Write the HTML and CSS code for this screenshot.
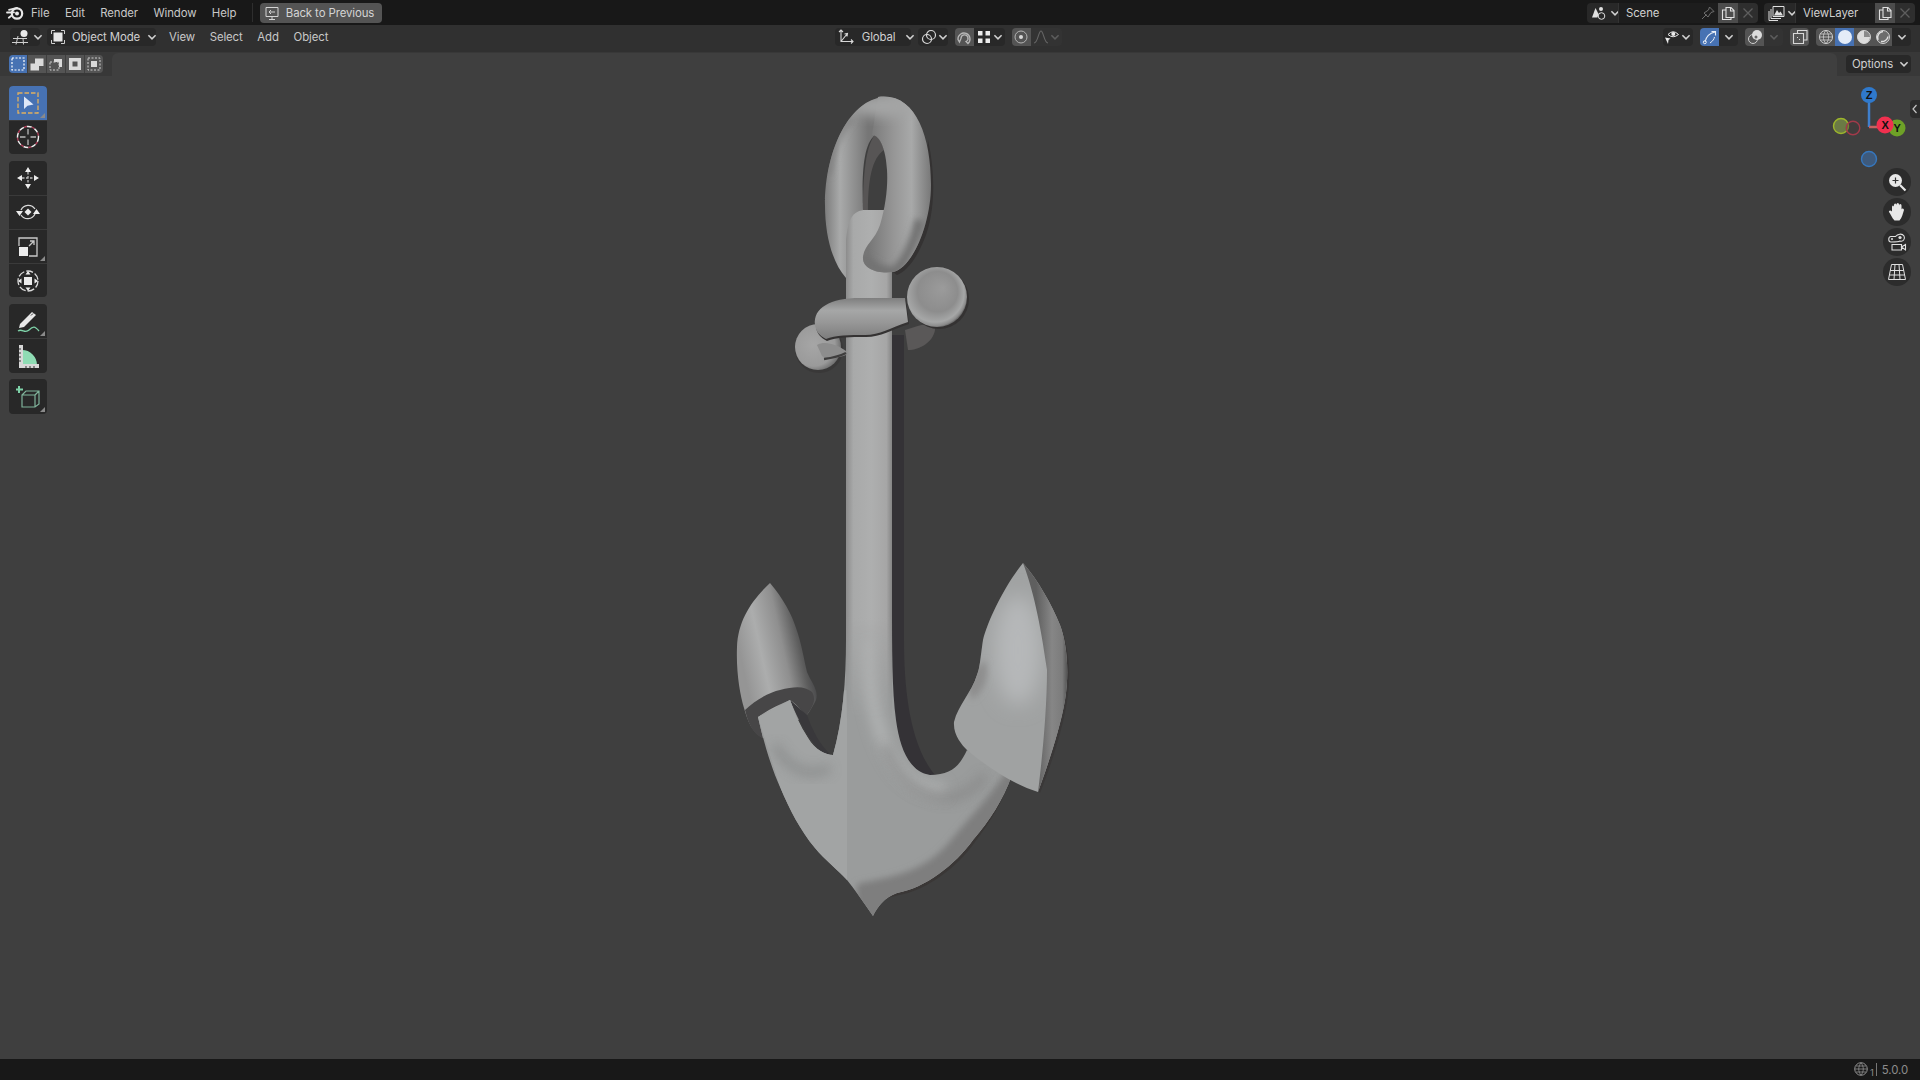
FILE: index.html
```html
<!DOCTYPE html>
<html lang="en">

<head>
    <meta charset="UTF-8" />
    <title>Blender</title>
    <link rel="stylesheet" href="styles.css">
</head>

<body>
    <svg class="defs" width="0" height="0">
        <symbol id="chev" viewBox="0 0 10 10">
            <path d="M2 3.5 5 6.5 8 3.5" fill="none" stroke="currentColor" stroke-width="1.3" />
        </symbol>
        <symbol id="copy" viewBox="0 0 16 16">
            <path d="M6 2.500h5l3 3v7H6zM10.500 2.500v3.500H14M6 5H2.500v9.500H11v-2" fill="none" stroke="#e0e0e0" stroke-width="1.100" />
        </symbol>
        <symbol id="cross" viewBox="0 0 16 16">
            <path d="M3.500 3.500 12.500 12.500M12.500 3.500 3.500 12.500" stroke="#5e5e5e" stroke-width="1.300" />
        </symbol>
    </svg>

    <div class="topbar">
        <svg class="logo" viewBox="0 0 18 16" width="18" height="16">
            <circle cx="11" cy="8.500" r="5.200" fill="none" stroke="#e8e8e8" stroke-width="2.200" />
            <circle cx="11" cy="8.500" r="2" fill="#e8e8e8" />
            <path d="M1 7.500 8 7.400M3 4.800 11 2.800M5 11 2.800 12.800" stroke="#e8e8e8" stroke-width="1.800" stroke-linecap="round" />
        </svg>
        <nav class="menu top-menu">
            <span>File</span><span>Edit</span><span>Render</span><span>Window</span><span>Help</span>
        </nav>
        <div class="top-sep"></div>
        <div class="back-btn">
            <svg viewBox="0 0 16 16" width="16" height="16">
                <path d="M2 2.500h12v9H2zM5 14.500h6M8 11.500v3M11 7H5M7 5 5 7 7 9" fill="none" stroke="#d4d4d4" stroke-width="1" />
            </svg>
            <span>Back to Previous</span>
        </div>
        <div class="top-right">
            <div class="id-field scene">
                <div class="id-icon">
                    <svg viewBox="0 0 18 16" width="18" height="16">
                        <path d="M1 12.500 4.500 3l3 6-1 3.500z" fill="#e0e0e0" />
                        <circle cx="10" cy="4" r="2" fill="#e0e0e0" />
                        <circle cx="10.500" cy="11" r="3.300" fill="none" stroke="#e0e0e0" stroke-width="1" />
                    </svg>
                    <svg class="chev"><use href="#chev" /></svg>
                </div>
                <div class="id-name">
                    <span>Scene</span>
                    <svg viewBox="0 0 16 16" width="16" height="16">
                        <path d="M2 14 6.500 9.500M9.500 2 14 6.500 11 7.500 8 12 4 8 8.500 5z" fill="none" stroke="#6e6e6e" stroke-width="1" />
                    </svg>
                </div>
                <div class="id-copy"><svg width="16" height="16"><use href="#copy" /></svg></div>
                <div class="id-x"><svg width="16" height="16"><use href="#cross" /></svg></div>
            </div>
            <div class="id-field layer">
                <div class="id-icon">
                    <svg viewBox="0 0 18 16" width="18" height="16">
                        <path d="M5 1.500h11v10H5zM3 4v9.500h10M1 6v9.500h9" fill="none" stroke="#e0e0e0" stroke-width="1" />
                        <path d="M6 10.500 9 5l2 3 1.500-1.500 2.500 4z" fill="#e0e0e0" />
                    </svg>
                    <svg class="chev"><use href="#chev" /></svg>
                </div>
                <div class="id-name"><span>ViewLayer</span></div>
                <div class="id-copy"><svg width="16" height="16"><use href="#copy" /></svg></div>
                <div class="id-x"><svg width="16" height="16"><use href="#cross" /></svg></div>
            </div>
        </div>
    </div>

    <div class="header">
        <div class="btn editor-btn">
            <svg viewBox="0 0 20 16" width="20" height="16">
                <circle cx="12" cy="4.500" r="3.500" fill="#e8e8e8" />
                <path d="M1 9.500H15M0 13.500H16M6 7 4 15.500M11 9 11.500 15.500" stroke="#cfcfcf" stroke-width="1" fill="none" />
            </svg>
            <svg class="chev"><use href="#chev" /></svg>
        </div>
        <div class="btn mode-btn">
            <svg viewBox="0 0 16 16" width="16" height="16">
                <path d="M1.500 5V1.500H5M11 1.500h3.500V5M14.500 11v3.500H11M5 14.500H1.500V11" fill="none" stroke="#cfcfcf" stroke-width="1" />
                <rect x="3.500" y="3.500" width="9" height="9" fill="#e6e6e6" />
            </svg>
            <span>Object Mode</span>
            <svg class="chev"><use href="#chev" /></svg>
        </div>
        <nav class="menu head-menu">
            <span>View</span><span>Select</span><span>Add</span><span>Object</span>
        </nav>

        <div class="head-center">
            <div class="btn global-btn">
                <svg viewBox="0 0 16 16" width="16" height="16">
                    <path d="M3 1v11.500h12M3 12.500 9 5M1 3 3 1 5 3M13 10.500 15 12.500 13 14.500M6.500 5 9.500 4.500 9 7.500" fill="none" stroke="#d8d8d8" stroke-width="1.100" />
                </svg>
                <span>Global</span>
                <svg class="chev"><use href="#chev" /></svg>
            </div>
            <div class="btn link-btn">
                <svg viewBox="0 0 16 16" width="16" height="16">
                    <circle cx="6" cy="10" r="4.500" fill="none" stroke="#d8d8d8" stroke-width="1.200" />
                    <circle cx="10" cy="6" r="4.500" fill="none" stroke="#d8d8d8" stroke-width="1.200" />
                </svg>
                <svg class="chev"><use href="#chev" /></svg>
            </div>
            <div class="btn-pair">
                <div class="square grey">
                    <svg viewBox="0 0 16 16" width="16" height="16">
                        <path d="M2 10.500A6 6 0 1 1 12 14.500L10 12.500A3.500 3.500 0 1 0 5 9.500L3.500 13z" fill="none" stroke="#b8b8b8" stroke-width="1.300" />
                    </svg>
                </div>
                <div class="square dark wide">
                    <svg viewBox="0 0 16 16" width="16" height="16">
                        <path d="M2 2h4.500v4.500H2zM9.500 2H14v4.500H9.500zM2 9.500h4.500V14H2zM9.500 9.500H14V14H9.500z" fill="#ececec" />
                    </svg>
                    <svg class="chev"><use href="#chev" /></svg>
                </div>
            </div>
            <div class="btn-pair">
                <div class="square grey">
                    <svg viewBox="0 0 16 16" width="16" height="16">
                        <circle cx="8" cy="8" r="6" fill="none" stroke="#b4b4b4" stroke-width="1" />
                        <circle cx="8" cy="8" r="2" fill="#d8d8d8" />
                    </svg>
                </div>
                <div class="square dim wide">
                    <svg viewBox="0 0 16 16" width="16" height="16">
                        <path d="M1 14C5 14 5.500 2 8 2s3 12 7 12" fill="none" stroke="#666" stroke-width="1.100" />
                    </svg>
                    <svg class="chev faded"><use href="#chev" /></svg>
                </div>
            </div>
        </div>

        <div class="head-right">
            <div class="btn vis-btn">
                <svg viewBox="0 0 16 16" width="16" height="16">
                    <path d="M4 5.500Q9 0 14.500 5.500 9 10 4 5.500z" fill="none" stroke="#ececec" stroke-width="1" />
                    <circle cx="9.300" cy="5" r="2" fill="#ececec" />
                    <path d="M1 8.500 6.500 9.500 4.500 11 4 15z" fill="#ececec" />
                </svg>
                <svg class="chev"><use href="#chev" /></svg>
            </div>
            <div class="btn-pair">
                <div class="square blue">
                    <svg viewBox="0 0 16 16" width="16" height="16">
                        <path d="M3 13C4 8 8 4 13 3M9.500 2.500 13.500 2.500 13.500 6.500" fill="none" stroke="#e8eef8" stroke-width="1.100" />
                        <circle cx="2.800" cy="13.200" r="1.500" fill="none" stroke="#e8eef8" stroke-width="1" />
                        <path d="M8 14C11 12 12 10 12.500 8" fill="none" stroke="#e8eef8" stroke-width="1" />
                    </svg>
                </div>
                <div class="square dark small"><svg class="chev"><use href="#chev" /></svg></div>
            </div>
            <div class="btn-pair">
                <div class="square grey">
                    <svg viewBox="0 0 16 16" width="16" height="16">
                        <circle cx="6" cy="10" r="4.500" fill="none" stroke="#d0d0d0" stroke-width="1" />
                        <circle cx="10" cy="6" r="5" fill="#dcdcdc" />
                        <circle cx="9" cy="8" r="1.500" fill="#666" />
                    </svg>
                </div>
                <div class="square dim small"><svg class="chev faded"><use href="#chev" /></svg></div>
            </div>
            <div class="square grey xray">
                <svg viewBox="0 0 16 16" width="16" height="16">
                    <path d="M5.500 4.500V1.500H15V11H11.500M1.500 4.500H11.500V14.500H1.500z" fill="none" stroke="#d8d8d8" stroke-width="1.100" />
                    <path d="M5 8.500h1M7 10.500h1" stroke="#d8d8d8" />
                </svg>
            </div>
            <div class="btn-pair">
                <div class="square grey">
                    <svg viewBox="0 0 16 16" width="16" height="16">
                        <circle cx="8" cy="8" r="6.500" fill="none" stroke="#d0d0d0" stroke-width="1" />
                        <path d="M1.500 8h13M8 1.500C4.500 5 4.500 11 8 14.500 11.500 11 11.500 5 8 1.500M2.500 5h11M2.500 11h11" fill="none" stroke="#d0d0d0" stroke-width=".8" />
                    </svg>
                </div>
                <div class="square blue">
                    <svg viewBox="0 0 16 16" width="16" height="16"><circle cx="8" cy="8" r="7" fill="#e4ecf8" /></svg>
                </div>
                <div class="square grey">
                    <svg viewBox="0 0 16 16" width="16" height="16">
                        <circle cx="8" cy="8" r="6.500" fill="#8a8a8a" stroke="#d0d0d0" stroke-width="1" />
                        <path d="M8 1.500A6.500 6.500 0 0 0 8 14.500 6.500 6.500 0 0 0 14 8H8z" fill="#dcdcdc" />
                    </svg>
                </div>
                <div class="square grey">
                    <svg viewBox="0 0 16 16" width="16" height="16">
                        <circle cx="8" cy="8" r="6.500" fill="#6c6c6c" stroke="#d0d0d0" stroke-width="1" />
                        <path d="M3 11C1.500 7 4 3 8 2.500M6 12.500C9 13 12.500 11 13 7.500" fill="none" stroke="#e0e0e0" stroke-width="1.500" />
                    </svg>
                </div>
                <div class="square dark small"><svg class="chev"><use href="#chev" /></svg></div>
            </div>
        </div>
    </div>

    <main class="viewport">
        <div class="toolrow">
            <div class="strip strip-left">
                <div class="sel-modes">
                    <div class="sel blue">
                        <svg viewBox="0 0 16 16" width="16" height="16">
                            <rect x="2" y="2" width="12" height="12" fill="none" stroke="#fff" stroke-width="1.200" stroke-dasharray="2 1.500" />
                        </svg>
                    </div>
                    <div class="sel">
                        <svg viewBox="0 0 16 16" width="16" height="16">
                            <path d="M1.500 7.500H6V2.500H14.500V10H10V14.500H1.500z" fill="#dadada" />
                        </svg>
                    </div>
                    <div class="sel">
                        <svg viewBox="0 0 16 16" width="16" height="16">
                            <path d="M6 3H14V11H11V6H6z" fill="#dadada" />
                            <rect x="2" y="6" width="9" height="8" fill="none" stroke="#cfcfcf" stroke-dasharray="2 1.500" />
                        </svg>
                    </div>
                    <div class="sel">
                        <svg viewBox="0 0 16 16" width="16" height="16">
                            <path d="M2 2H14V14H2zM5.500 5.500V10.500H10.500V5.500z" fill="#dadada" fill-rule="evenodd" />
                        </svg>
                    </div>
                    <div class="sel">
                        <svg viewBox="0 0 16 16" width="16" height="16">
                            <rect x="2" y="2" width="12" height="12" fill="none" stroke="#cfcfcf" stroke-dasharray="2 1.500" />
                            <rect x="5" y="5" width="6" height="6" fill="#dadada" />
                        </svg>
                    </div>
                </div>
            </div>
            <div class="row-gap"></div>
            <div class="strip strip-right">
                <div class="btn options-btn">
                    <span>Options</span>
                    <svg class="chev"><use href="#chev" /></svg>
                </div>
            </div>
        </div>

        <aside class="tools">
            <div class="tool-group">
                <div class="tool active more">
                    <svg viewBox="0 0 24 24" width="24" height="24">
                        <rect x="2" y="2" width="20" height="20" fill="none" stroke="#e0b060" stroke-width="1.300" stroke-dasharray="4.500 2" />
                        <path d="M8 5.500V18L11.500 14.800 17.500 13.500z" fill="#dfe8f8" />
                    </svg>
                </div>
                <div class="tool">
                    <svg viewBox="0 0 24 24" width="24" height="24">
                        <circle cx="12" cy="12" r="10.500" fill="none" stroke="#f0f0f0" stroke-width="1.400" stroke-dasharray="5 3" />
                        <circle cx="12" cy="12" r="10.500" fill="none" stroke="#b0405a" stroke-width="1.400" stroke-dasharray="3 5" stroke-dashoffset="-5" />
                        <path d="M12 4v5.500M12 14.500V20M4 12h5.500M14.500 12H20" stroke="#b8b8b8" stroke-width="1.300" />
                    </svg>
                </div>
            </div>
            <div class="tool-group">
                <div class="tool">
                    <svg viewBox="0 0 24 24" width="24" height="24">
                        <path d="M12 1 15 6H9zM12 23 9 18H15zM1 12 6 9V15zM23 12 18 15V9z" fill="#ececec" />
                        <path d="M12 6V18M6 12H18" stroke="#bdbdbd" stroke-width="1.300" stroke-dasharray="2.500 1.500" />
                    </svg>
                </div>
                <div class="tool">
                    <svg viewBox="0 0 24 24" width="24" height="24">
                        <path d="M12 8.500 15.500 12 12 15.500 8.500 12z" fill="#ececec" />
                        <path d="M5 10A8 8 0 0 1 19 9M19 14A8 8 0 0 1 5 15" fill="none" stroke="#d8d8d8" stroke-width="1.300" />
                        <path d="M0 11H7L3.500 16zM24 14H17L20.500 9z" fill="#ececec" />
                    </svg>
                </div>
                <div class="tool more">
                    <svg viewBox="0 0 24 24" width="24" height="24">
                        <rect x="3" y="12" width="9" height="9" fill="#ececec" />
                        <path d="M3 11V3H21V21H13M13 11 18 6M14 6H18V10" fill="none" stroke="#c8c8c8" stroke-width="1.300" />
                    </svg>
                </div>
                <div class="tool">
                    <svg viewBox="0 0 24 24" width="24" height="24">
                        <circle cx="12" cy="12" r="10" fill="none" stroke="#d8d8d8" stroke-width="1.300" stroke-dasharray="7 2" />
                        <rect x="8" y="8" width="8" height="8" fill="#ececec" />
                        <path d="M12 2 14.500 5.500H9.500zM12 22 9.500 18.500H14.500zM2 12 5.500 9.500V14.500zM22 12 18.500 14.500V9.500z" fill="#ececec" />
                    </svg>
                </div>
            </div>
            <div class="tool-group">
                <div class="tool more">
                    <svg viewBox="0 0 24 24" width="24" height="24">
                        <path d="M4 15 16 3 20 6 8 18 3 19z" fill="#e8e8e8" />
                        <path d="M17 4.500 15 6.500" stroke="#333" />
                        <path d="M2 22C6 19 9 25 13 21S19 17 23 22" fill="none" stroke="#7ed2a8" stroke-width="1.300" />
                    </svg>
                </div>
                <div class="tool">
                    <svg viewBox="0 0 24 24" width="24" height="24">
                        <path d="M6 22V6A15 15 0 0 1 21 21H6z" fill="#8fdcb4" />
                        <path d="M3 1H7V20H23V24H3z" fill="#d8d8d8" />
                        <path d="M3 5H5M3 9H5M3 13H5M3 17H5M10 22V24M14 22V24M18 22V24" stroke="#333" />
                    </svg>
                </div>
            </div>
            <div class="tool-group">
                <div class="tool more">
                    <svg viewBox="0 0 24 24" width="24" height="24">
                        <path d="M6 11 10 7H23V20L19 23H6zM6 11H19V23M19 11 23 7" fill="none" stroke="#7fb39a" stroke-width="1.200" />
                        <path d="M3 2V9M0 5.500H7" stroke="#7ed2a8" stroke-width="2" />
                    </svg>
                </div>
            </div>
        </aside>

        <svg class="anchor" viewBox="700 80 400 860" width="400" height="860">
            <defs>
                <filter id="b1" x="-20%" y="-20%" width="140%" height="140%"><feGaussianBlur stdDeviation="1" /></filter>
                <filter id="b3" x="-30%" y="-30%" width="160%" height="160%"><feGaussianBlur stdDeviation="3" /></filter>
                <filter id="b6" x="-40%" y="-40%" width="180%" height="180%"><feGaussianBlur stdDeviation="6" /></filter>
                <filter id="b10" x="-60%" y="-60%" width="220%" height="220%"><feGaussianBlur stdDeviation="10" /></filter>
                <linearGradient id="shaftG" gradientUnits="userSpaceOnUse" x1="846" y1="0" x2="892" y2="0">
                    <stop offset="0" stop-color="#8c8c8c" />
                    <stop offset=".16" stop-color="#a8a9a9" />
                    <stop offset=".55" stop-color="#aeafaf" />
                    <stop offset=".88" stop-color="#a6a6a6" />
                    <stop offset="1" stop-color="#858585" />
                </linearGradient>
                <linearGradient id="shaftFade" x1="0" y1="0" x2="0" y2="1">
                    <stop offset="0" stop-color="#fff" />
                    <stop offset=".8" stop-color="#fff" />
                    <stop offset="1" stop-color="#000" />
                </linearGradient>
                <mask id="shaftMask" maskUnits="userSpaceOnUse" x="840" y="200" width="60" height="520">
                    <rect x="840" y="200" width="60" height="520" fill="url(#shaftFade)" />
                </mask>
                <linearGradient id="ringL" gradientUnits="userSpaceOnUse" x1="825" y1="0" x2="868" y2="0">
                    <stop offset="0" stop-color="#7d7d7d" />
                    <stop offset=".35" stop-color="#a9aaaa" />
                    <stop offset="1" stop-color="#767676" />
                </linearGradient>
                <linearGradient id="ringR" gradientUnits="userSpaceOnUse" x1="868" y1="0" x2="932" y2="0">
                    <stop offset="0" stop-color="#767676" />
                    <stop offset=".4" stop-color="#969696" />
                    <stop offset=".68" stop-color="#a8a9a9" />
                    <stop offset="1" stop-color="#767676" />
                </linearGradient>
                <radialGradient id="ballG" cx=".45" cy=".45" r=".56" fx=".6" fy=".35">
                    <stop offset="0" stop-color="#9b9b9b" />
                    <stop offset=".6" stop-color="#8d8d8d" />
                    <stop offset=".86" stop-color="#a6a7a7" />
                    <stop offset=".96" stop-color="#8c8c8c" />
                    <stop offset="1" stop-color="#6e6e6e" />
                </radialGradient>
                <radialGradient id="smallG" cx=".4" cy=".45" r=".62">
                    <stop offset="0" stop-color="#a6a6a6" />
                    <stop offset=".75" stop-color="#9a9a9a" />
                    <stop offset="1" stop-color="#6a6a6a" />
                </radialGradient>
                <linearGradient id="barG" x1="0" y1="0" x2="0" y2="1">
                    <stop offset="0" stop-color="#7e7e7e" />
                    <stop offset=".3" stop-color="#a6a7a7" />
                    <stop offset=".6" stop-color="#979797" />
                    <stop offset="1" stop-color="#7c7c7c" />
                </linearGradient>
                <linearGradient id="flukeR" gradientUnits="userSpaceOnUse" x1="1036" y1="0" x2="1068" y2="0">
                    <stop offset="0" stop-color="#5f5f5f" />
                    <stop offset=".5" stop-color="#868686" />
                    <stop offset=".82" stop-color="#7c7c7c" />
                    <stop offset="1" stop-color="#4e4e4e" />
                </linearGradient>
                <linearGradient id="flukeL" gradientUnits="userSpaceOnUse" x1="737" y1="640" x2="805" y2="625">
                    <stop offset="0" stop-color="#959595" />
                    <stop offset=".3" stop-color="#acadad" />
                    <stop offset=".62" stop-color="#8f8f8f" />
                    <stop offset=".85" stop-color="#5d5d5d" />
                    <stop offset="1" stop-color="#434345" />
                </linearGradient>
                <clipPath id="bodyClip">
                    <path id="bodyShape" d="M846 272 846 640C846 680 843 720 833 755 826 755 815 750 808 738 800 726 794 712 790 700L758 717C762 735 770 765 780 787 790 810 800 830 815 848 825 860 838 870 847 880 855 890 862 900 873 916 878 906 884 898 897 893 925 888 955 865 973 840 990 820 1003 800 1012 775L967 750C960 765 952 775 930 775 910 772 900 750 896 720 892 690 892 650 892 600L892 272Z" />
                </clipPath>
                <clipPath id="flukeRClip">
                    <path d="M1023 563C1005 585 988 620 983 640 980 660 980 668 977 675 972 692 958 705 954 722 953 735 962 745 967 750 985 765 1010 783 1038 792 1046 770 1060 730 1065 700 1070 670 1066 640 1060 625 1052 605 1038 580 1023 563Z" />
                </clipPath>
                <clipPath id="ringClip">
                    <path d="M878 97C915 92 931 135 931 185 931 225 912 268 893 272 880 274 862 270 863 257 864 245 875 240 880 225 886 205 888 185 887 170 886 150 880 135 872 135Z" />
                    <path d="M887 97C850 97 825 150 825 205 825 235 832 262 846 278L860 240 863 210C862 180 862 145 875 135 885 130 892 145 895 165L910 110Z" />
                </clipPath>
            </defs>

            <!-- ring, back half -->
            <path d="M928 140C936 175 935 215 924 240 915 262 905 272 897 275L890 270 925 200Z" fill="#343232" />
            <path d="M887 97C850 97 825 150 825 205 825 235 832 262 846 278L860 240 863 210C862 180 862 145 875 135 885 130 892 145 895 165L910 110Z" fill="url(#ringL)" />
            <path d="M875 135C866 145 863 175 863 210L868 210C868 180 872 158 884 150 881 141 878 136 875 135Z" fill="#575555" />

            <!-- shadow band and left fluke sit behind the body -->
            <path d="M892 335H904V640C904 690 910 745 935 775L925 778C905 772 897 745 893 720 892 690 892 650 892 600Z" fill="#343236" />
            <path d="M1012 775C1003 802 990 822 975 842 957 868 925 891 899 895L880 900 960 800Z" fill="#3a3736" />
            <path d="M1014 778 1010 760 1020 770Z" fill="#3a3736" />
            <path d="M770 583C783 598 792 615 796 628 802 645 804 660 807 672 811 682 819 690 816 700 812 708 808 714 806 716L763 738C752 732 748 722 744 708 740 695 736 672 737 647 738 620 752 600 770 583Z" fill="url(#flukeL)" />
            <path d="M745 710C755 700 770 692 780 690 795 686 805 686 812 692 817 700 812 708 806 716 800 708 795 703 790 700 780 704 768 710 758 717L763 738C752 734 748 722 745 710Z" fill="#474647" />
            <path d="M790 700 807 715C812 730 820 745 831 755L826 754C815 750 800 725 790 700Z" fill="#39383b" />

            <!-- body -->
            <use href="#bodyShape" fill="#9a9c9c" />
            <g clip-path="url(#bodyClip)">
                <path d="M758 717 780 700 847 690V885L800 850Z" fill="#a2a4a4" />
                <path d="M857 884C890 876 925 875 955 835 985 800 995 790 1012 762L1035 800 900 925H855Z" fill="#7e7e7e" filter="url(#b3)" />
                <path d="M868 640C868 710 885 790 945 790" fill="none" stroke="#aeb0b0" stroke-width="14" filter="url(#b6)" />
                <path d="M885 745C895 775 915 795 945 798 960 798 975 790 985 775" fill="none" stroke="#858585" stroke-width="8" filter="url(#b6)" opacity=".8" />
                <path d="M775 745C785 765 805 780 830 768" fill="none" stroke="#858787" stroke-width="8" filter="url(#b6)" opacity=".8" />
                <g mask="url(#shaftMask)"><rect x="846" y="200" width="46" height="520" fill="url(#shaftG)" /></g>
            </g>
            <path d="M846 275V240C848 220 852 210 866 210H884L892 275Z" fill="url(#shaftG)" />

            <!-- ring, front half -->
            <path d="M878 97C915 92 931 135 931 185 931 225 912 268 893 272 880 274 862 270 863 257 864 245 875 240 880 225 886 205 888 185 887 170 886 150 880 135 872 135Z" fill="url(#ringR)" />
            <g clip-path="url(#ringClip)">
                <path d="M863 258C875 270 885 272 893 272 905 265 915 240 920 220" fill="none" stroke="#727272" stroke-width="10" filter="url(#b3)" />
                <ellipse cx="885" cy="106" rx="34" ry="11" fill="#a4a5a5" filter="url(#b6)" />
                <path d="M852 118C840 130 832 150 828 175" fill="none" stroke="#7e7e7e" stroke-width="5" filter="url(#b3)" />
            </g>

            <!-- shackle -->
            <path d="M905 330C920 325 935 320 935 330 933 342 920 350 908 350Z" fill="#5a5858" />
            <circle cx="819" cy="349" r="24" fill="#393838" />
            <circle cx="818" cy="347" r="23" fill="url(#smallG)" />
            <path d="M817 345C825 340 838 345 846 351V355C838 358 826 360 822 356Z" fill="#8d8d8d" />
            <path d="M824 359C832 358 840 356 846 353" fill="none" stroke="#3e3d3d" stroke-width="2.500" />
            <path d="M905 298H860C830 298 813 308 815 325 816 332 820 336 826 339 835 335 850 335 865 335 880 335 890 328 908 322Z" fill="#343232" transform="translate(1 2)" />
            <path d="M905 298H860C830 298 813 308 815 325 816 332 820 336 826 339 835 335 850 335 865 335 880 335 890 328 908 322Z" fill="url(#barG)" />
            <circle cx="939" cy="299" r="30" fill="#343232" />
            <circle cx="937" cy="297" r="30" fill="url(#ballG)" />

            <!-- right fluke -->
            <path d="M1023 563C1038 580 1052 605 1060 625 1068 645 1072 670 1067 702 1062 732 1050 768 1040 793L1030 780Z" fill="#3a3838" />
            <path d="M1023 563C1005 585 988 620 983 640 980 660 980 668 977 675 972 692 958 705 954 722 953 735 962 745 967 750 985 765 1010 783 1038 792 1046 770 1060 730 1065 700 1070 670 1066 640 1060 625 1052 605 1038 580 1023 563Z" fill="#a0a2a2" />
            <g clip-path="url(#flukeRClip)">
                <ellipse cx="1018" cy="650" rx="24" ry="55" fill="#b6b8b9" filter="url(#b10)" />
                <path d="M965 680 972 700C985 690 990 675 985 660Z" fill="#8e8e8e" filter="url(#b3)" />
                <path d="M1023 563C1033 590 1040 620 1047 670 1047 710 1042 760 1038 792H1080V563Z" fill="url(#flukeR)" />
            </g>
        </svg>

        <div class="gizmo">
            <svg viewBox="0 0 84 104" width="84" height="104">
                <path d="M44 48V18" stroke="#3f7fcc" stroke-width="2.500" />
                <path d="M44 48H58" stroke="#c86060" stroke-width="2.500" />
                <circle cx="72" cy="49" r="8.500" fill="#6ea127" />
                <text x="72" y="53" class="axis">Y</text>
                <circle cx="16" cy="47" r="7.500" fill="#6b7a45" stroke="#9db62b" stroke-width="1.400" />
                <circle cx="28" cy="49" r="6.800" fill="#43393a" fill-opacity=".4" stroke="#a13a4a" stroke-width="1.400" />
                <circle cx="60" cy="46" r="8.500" fill="#f1304f" />
                <text x="60" y="50" class="axis">X</text>
                <circle cx="44" cy="16" r="8" fill="#2f79cc" />
                <text x="44" y="20" class="axis">Z</text>
                <circle cx="44" cy="80" r="7.500" fill="#3e5a7c" stroke="#3677be" stroke-width="1.400" />
            </svg>
        </div>

        <div class="panel-tab">
            <svg viewBox="0 0 10 18" width="10" height="18"><path d="M6.500 5 3 9 6.500 13" fill="none" stroke="#c4c4c4" stroke-width="1.200" /></svg>
        </div>

        <div class="nav-btns">
            <div class="nav-btn">
                <svg viewBox="0 0 20 20" width="20" height="20">
                    <circle cx="8.500" cy="8.500" r="6.500" fill="#e8e8e8" />
                    <path d="M8.500 5.500v6M5.500 8.500h6" stroke="#333" stroke-width="1.200" />
                    <path d="M13 13 18.500 18.500" stroke="#e8e8e8" stroke-width="2.200" />
                </svg>
            </div>
            <div class="nav-btn">
                <svg viewBox="0 0 20 20" width="20" height="20">
                    <path d="M5 8V5Q5 3.500 6 3.500T7 5V3Q7 1.500 8.200 1.500T9.500 3V2.500Q9.500 1 10.800 1T12 2.500V3.500Q12 2 13.300 2T14.500 3.500V7.500Q14.500 6.500 15.700 6.500T17 8C16 11 15 16 12.500 18.500H7.500C5 16 3.500 12 2 10 1.500 8.500 3.500 7.500 5 9.500z" fill="#e8e8e8" />
                </svg>
            </div>
            <div class="nav-btn">
                <svg viewBox="0 0 20 20" width="20" height="20">
                    <path d="M4 10C1 10 1 4.500 4 4.500H8.500C10.500 2 15 1 17 4 18.500 7 16 10 13 9 11.500 10 6 10 4 10zM5 12.500H14.500V18H5zM14.500 15 18.500 12.500V18z" fill="none" stroke="#e0e0e0" stroke-width="1.100" />
                    <circle cx="13" cy="5.500" r="1.600" fill="#e0e0e0" />
                    <circle cx="5" cy="7" r="1" fill="#e0e0e0" />
                </svg>
            </div>
            <div class="nav-btn">
                <svg viewBox="0 0 20 20" width="20" height="20">
                    <path d="M4.500 2.500H15.500L18.500 17.500H1.500zM3.300 8.500H16.700M2.500 13H17.500M8 2.500 7 17.500M12 2.500 13 17.500" fill="none" stroke="#e0e0e0" stroke-width="1" />
                </svg>
            </div>
        </div>
    </main>

    <footer class="statusbar">
        <svg viewBox="0 0 16 16" width="16" height="16">
            <circle cx="7" cy="7" r="6.300" fill="none" stroke="#909090" stroke-width="1" />
            <path d="M1 7h12M7 1C4 4 4 10 7 13 10 10 10 4 7 1M2 4h10M2 10h10" fill="none" stroke="#909090" stroke-width=".8" />
        </svg>
        <span class="stat-sub">1</span>
        <div class="stat-sep"></div>
        <span>5.0.0</span>
    </footer>
</body>

</html>
```

FILE: styles.css
```css
* {
    box-sizing: border-box;
}

html,
body {
    margin: 0;
    height: 100%;
}

body {
    display: flex;
    flex-direction: column;
    width: 1920px;
    height: 1080px;
    overflow: hidden;
    background: #3f3f3f;
    color: #c8c8c8;
    font-family: Inter, "Noto Sans", sans-serif;
    font-size: 11.4px;
    letter-spacing: -0.1px;
    white-space: nowrap;
}

svg {
    display: block;
    flex: none;
}

.defs {
    position: absolute;
}

.chev {
    width: 12px;
    height: 12px;
    color: #d0d0d0;
}

.chev.faded {
    color: #5c5c5c;
}

/* top bar */
.topbar {
    display: flex;
    align-items: center;
    height: 25px;
    padding-left: 6px;
    background: #181818;
    flex: none;
}

.menu {
    display: flex;
    gap: 15px;
}

.top-menu {
    gap: 15.4px;
    margin-left: 7px;
}

.top-sep {
    width: 1px;
    height: 19px;
    margin-left: 15.500px;
    background: #2e2e2e;
}

.back-btn {
    display: flex;
    align-items: center;
    gap: 6px;
    width: 122px;
    height: 20px;
    margin-left: 7px;
    padding-left: 4px;
    background: #545454;
    border-radius: 4px;
    color: #d4d4d4;
}

.top-right {
    display: flex;
    gap: 6px;
    margin-left: auto;
    padding-right: 5px;
}

.id-field {
    display: flex;
    height: 20px;
}

.id-icon {
    display: flex;
    align-items: center;
    width: 31px;
    padding-left: 4px;
    background: #282828;
    border-radius: 4px 0 0 4px;
}

.id-name {
    display: flex;
    align-items: center;
    justify-content: space-between;
    padding: 0 2px 0 7px;
    background: #1d1d1d;
    color: #d0d0d0;
    border-left: 1px solid #333;
}

.scene .id-name {
    width: 100px;
}

.layer .id-name {
    width: 80px;
}

.id-copy,
.id-x {
    display: flex;
    align-items: center;
    justify-content: center;
    width: 20px;
}

.id-copy {
    background: #4c4c4c;
}

.id-x {
    background: #2e2e2e;
    border-radius: 0 4px 4px 0;
}

/* 3d view header */
.header {
    display: flex;
    align-items: flex-start;
    height: 27px;
    padding: 3px 9px 0 10px;
    background: #303030;
    flex: none;
}

.btn {
    display: flex;
    align-items: center;
    height: 18px;
    background: #282828;
    border-radius: 4px;
    color: #d0d0d0;
}

.editor-btn {
    width: 30px;
    padding-left: 2px;
}

.mode-btn {
    width: 109px;
    margin-left: 7px;
    padding-left: 3px;
    gap: 6px;
}

.mode-btn .chev {
    margin-left: auto;
    margin-right: 1px;
}

.head-menu {
    height: 18px;
    align-items: center;
    gap: 14.7px;
    margin-left: 13px;
}

.head-center {
    display: flex;
    gap: 7px;
    margin-left: 506.5px;
}

.global-btn {
    width: 76px;
    padding-left: 3px;
    gap: 8px;
}

.global-btn .chev {
    margin-left: auto;
    margin-right: 1px;
}

.link-btn {
    width: 30px;
    padding-left: 3px;
}

.btn-pair {
    display: flex;
}

.square {
    display: flex;
    align-items: center;
    justify-content: center;
    width: 19px;
    height: 18px;
}

.square.grey {
    background: #545454;
}

.square.blue {
    background: #4772b3;
}

.square.dark {
    background: #282828;
}

.square.dim {
    background: #333;
}

.square.wide {
    width: 31px;
    justify-content: flex-start;
    padding-left: 2px;
}

.square.small {
    width: 19px;
}

.btn-pair .square:first-child {
    border-radius: 4px 0 0 4px;
}

.btn-pair .square:last-child {
    border-radius: 0 4px 4px 0;
}

.head-right {
    display: flex;
    gap: 7px;
    margin-left: auto;
}

.vis-btn {
    width: 30px;
    padding-left: 1px;
}

.square.xray {
    border-radius: 4px;
}

/* viewport */
.viewport {
    position: relative;
    flex: 1;
    min-height: 0;
    background: #3f3f3f;
}

.toolrow {
    display: flex;
    height: 24px;
    background: #383838;
}

.strip {
    display: flex;
    align-items: flex-start;
}

.strip-left {
    width: 112px;
    padding: 3px 0 0 9px;
}

.strip-right {
    width: 83px;
    padding: 3px 9px 0 9px;
}

.row-gap {
    flex: 1;
    margin-top: 1px;
    background: #3f3f3f;
    border-radius: 6px 6px 0 0;
}

.sel-modes {
    display: flex;
    gap: 1px;
    height: 18px;
    background: #3f3f3f;
    border-radius: 4px;
}

.sel {
    display: flex;
    align-items: center;
    justify-content: center;
    width: 18px;
    background: #545454;
}

.sel.blue {
    background: #4772b3;
    border-radius: 4px 0 0 4px;
}

.sel:last-child {
    border-radius: 0 4px 4px 0;
}

.options-btn {
    width: 65px;
    justify-content: space-between;
    padding: 0 1px 0 6px;
}

/* toolbar */
.tools {
    display: flex;
    flex-direction: column;
    gap: 6.8px;
    width: 38px;
    margin: 9.5px 0 0 9px;
    position: relative;
    z-index: 1;
}

.tool-group {
    background: #282828;
    border-radius: 4px;
    overflow: hidden;
}

.tool {
    position: relative;
    display: flex;
    align-items: center;
    justify-content: center;
    height: 34.2px;
}

.tool + .tool {
    border-top: 1px solid #3a3a3a;
}

.tool.active {
    background: #4772b3;
}

.tool.more::after {
    content: "";
    position: absolute;
    right: 2px;
    bottom: 2px;
    border-style: solid;
    border-width: 0 0 5px 5px;
    border-color: transparent transparent #8a8a8a transparent;
}

/* model */
.anchor {
    position: absolute;
    left: 700px;
    top: 28px;
}

/* gizmo and nav */
.gizmo {
    position: absolute;
    left: 1825px;
    top: 27px;
}

.axis {
    fill: #111;
    font-family: "Liberation Sans", sans-serif;
    font-size: 11px;
    font-weight: 700;
    text-anchor: middle;
}

.panel-tab {
    position: absolute;
    right: 0;
    top: 48px;
    width: 10px;
    height: 18px;
    background: #2c2c2c;
    border-radius: 4px 0 0 4px;
}

.nav-btns {
    position: absolute;
    left: 1883px;
    top: 116px;
    display: flex;
    flex-direction: column;
    gap: 2px;
}

.nav-btn {
    display: flex;
    align-items: center;
    justify-content: center;
    width: 28px;
    height: 28px;
    background: #2c2c2c;
    border-radius: 50%;
}

/* status bar */
.statusbar {
    display: flex;
    align-items: center;
    justify-content: flex-end;
    height: 21px;
    padding-right: 12px;
    background: #181818;
    color: #8c8c8c;
    flex: none;
}

.stat-sub {
    margin: 5px 0 0 0;
    font-size: 9.5px;
}

.stat-sep {
    width: 1px;
    height: 13px;
    margin: 0 5px 0 2px;
    background: #777;
}
```
